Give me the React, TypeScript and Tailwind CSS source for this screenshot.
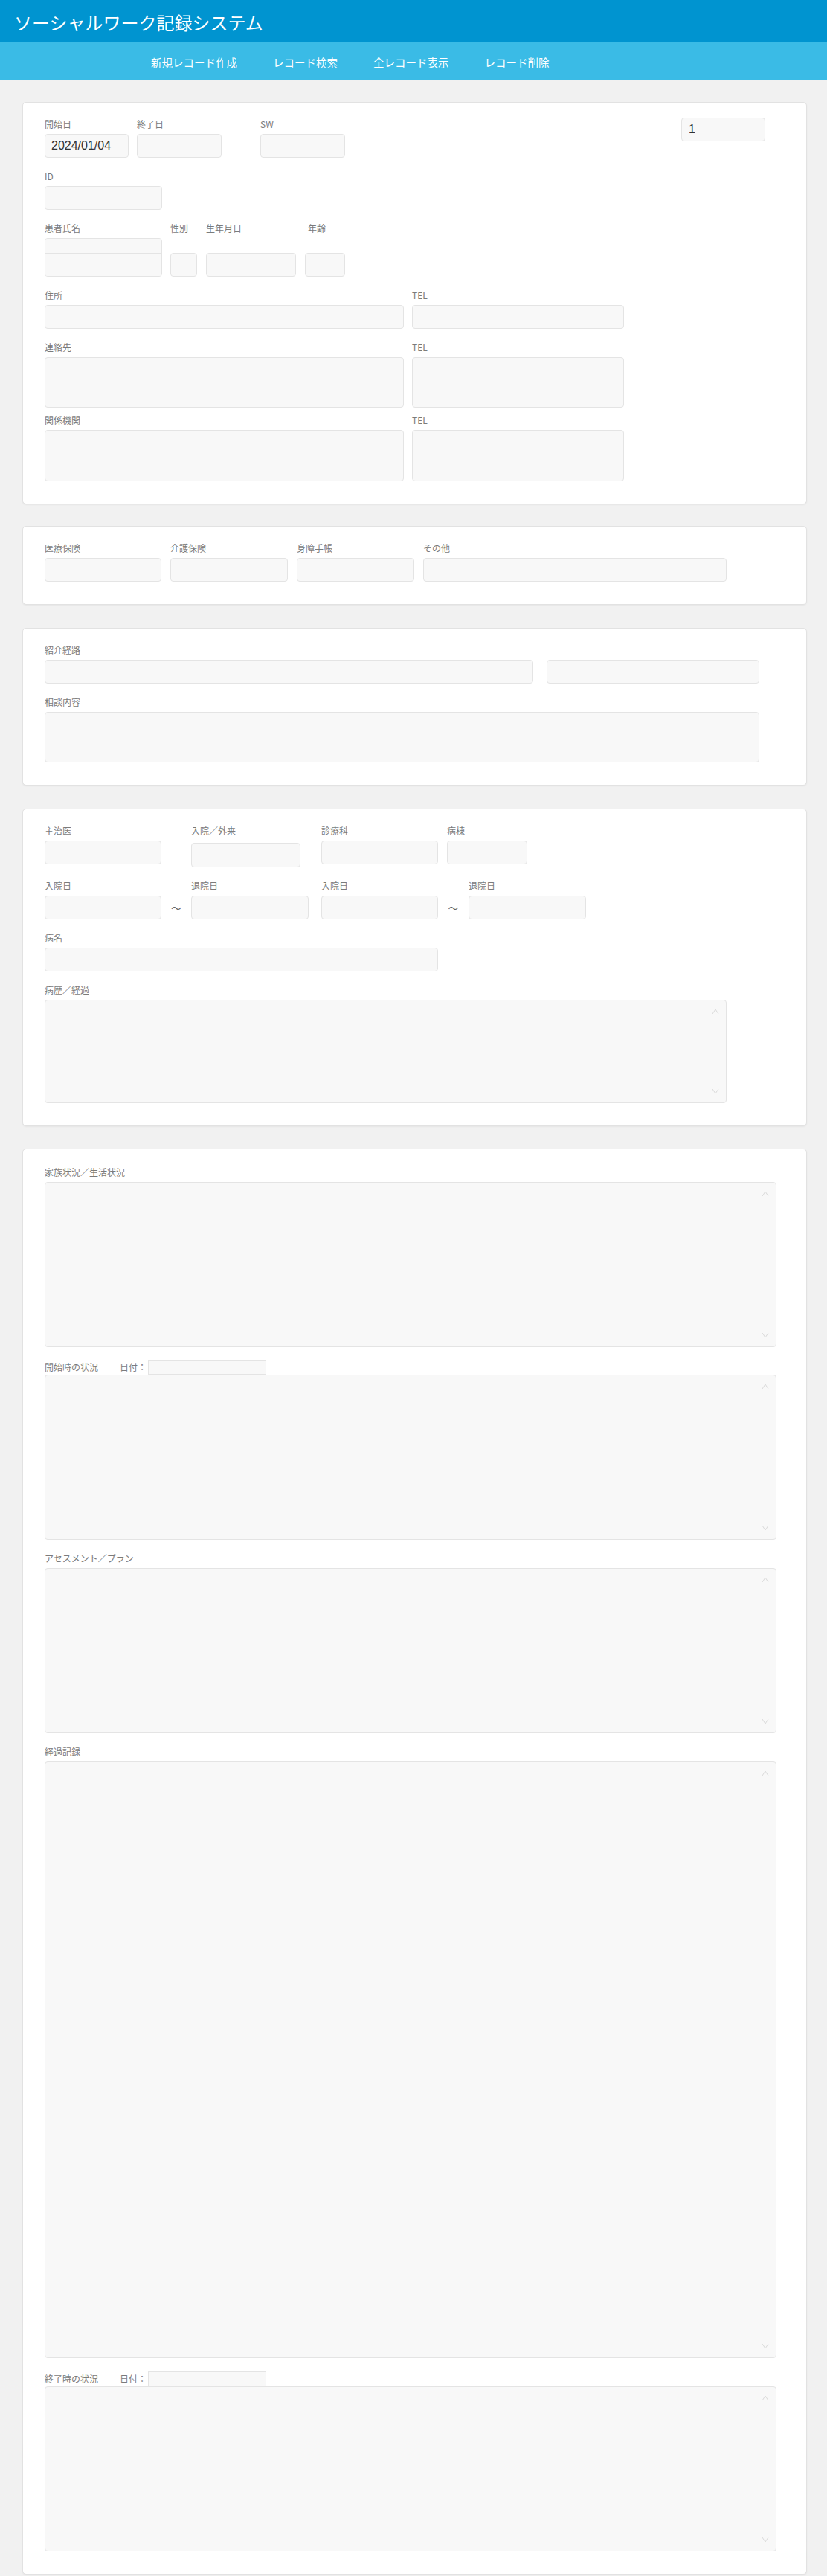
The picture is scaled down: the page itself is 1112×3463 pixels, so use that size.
import React from "react";

// ─── Shared styles ────────────────────────────────────────────────────────────

const boxCls =
  "h-[32px] rounded-[4px] border border-[#e4e4e4] bg-[#f8f8f8] px-[8px] text-[16px] text-[#333] font-['Liberation_Sans',sans-serif] outline-none";

// ─── Label ────────────────────────────────────────────────────────────────────

const Label = ({ children, className = "" }: { children: React.ReactNode; className?: string }) => (
  <div className={`h-[18px] whitespace-nowrap text-[12px] leading-[18px] text-[#7b7b7b] ${className}`}>
    {children}
  </div>
);

// ─── Field: label over a single-line input ────────────────────────────────────

const Field = ({
  label,
  width,
  value = "",
  className = "",
  labelClass = "",
  inputClass = "",
}: {
  label:       string;
  width:       string;
  value?:      string;
  className?:  string;
  labelClass?: string;
  inputClass?: string;
}) => (
  <div className={`flex shrink-0 flex-col ${className}`}>
    <Label className={labelClass}>{label}</Label>
    <input readOnly defaultValue={value} className={`${boxCls} mt-[4px] ${width} ${inputClass}`} />
  </div>
);

// ─── Scroll arrows (the faint ^ v drawn inside the long textareas) ────────────

const Chevron = ({ up, className }: { up: boolean; className: string }) => (
  <svg width="10" height="8" viewBox="0 0 10 8" className={`pointer-events-none absolute ${className}`}>
    <polyline
      points={up ? "1,7 5,1 9,7" : "1,1 5,7 9,1"}
      fill="none"
      stroke="#d9d9d9"
      strokeWidth="1"
    />
  </svg>
);

// ─── Area: textarea block ─────────────────────────────────────────────────────

const Area = ({
  width,
  height,
  arrows = false,
}: {
  width:   string;
  height:  string;
  arrows?: boolean;
}) => (
  <div className={`relative shrink-0 ${width}`}>
    <textarea
      readOnly
      className={`block w-full ${height} resize-none overflow-hidden rounded-[4px] border border-[#e4e4e4] bg-[#f8f8f8] outline-none`}
    />
    {arrows && (
      <>
        <Chevron up className="right-[10px] top-[12px]" />
        <Chevron up={false} className="bottom-[12px] right-[10px]" />
      </>
    )}
  </div>
);

// ─── Card ─────────────────────────────────────────────────────────────────────

const Card = ({ children, className = "" }: { children: React.ReactNode; className?: string }) => (
  <section
    className={`ml-[30px] w-[1055px] rounded-[5px] border border-[#e2e2e2] bg-white px-[29px] pb-[30px] shadow-[0_1px_2px_rgba(0,0,0,0.05)] ${className}`}
  >
    {children}
  </section>
);

// ─── Tilde between date pairs ─────────────────────────────────────────────────

const Tilde = ({ width }: { width: string }) => (
  <div className={`flex h-[32px] shrink-0 items-center justify-center self-end text-[14px] text-[#666] ${width}`}>
    ～
  </div>
);

// ─── Dated section: label + 日付 + small date box, textarea below ─────────────

const DatedArea = ({ label, className = "" }: { label: string; className?: string }) => (
  <div className={className}>
    <div className="flex h-[20px] items-center">
      <span className="w-[101px] text-[12px] text-[#7b7b7b]">{label}</span>
      <span className="w-[38px] text-[12px] text-[#7b7b7b]">日付：</span>
      <input readOnly className="h-[20px] w-[159px] border border-[#e4e4e4] bg-[#f8f8f8] outline-none" />
    </div>
    <Area width="w-[984px]" height="h-[222px]" arrows />
  </div>
);

// ─── App ──────────────────────────────────────────────────────────────────────

export default function App() {
  return (
    <div className="min-h-screen bg-[#f1f1f1] pb-[6px] font-['Noto_Sans_CJK_JP',sans-serif]">
      {/* Title bar */}
      <header className="flex h-[57px] items-center bg-[#0094d0] pl-[19px] pt-[2px]">
        <h1 className="text-[24px] font-normal leading-none text-white">ソーシャルワーク記録システム</h1>
      </header>

      {/* Menu */}
      <nav className="flex h-[50px] items-center gap-[48px] bg-[#3abbe6] pl-[203px] pt-[3px] text-[14.5px] text-white">
        <span>新規レコード作成</span>
        <span>レコード検索</span>
        <span>全レコード表示</span>
        <span>レコード削除</span>
      </nav>

      {/* ── Card 1: basic info ── */}
      <Card className="mt-[30px] pt-[20px]">
        <div className="flex items-start">
          <Field label="開始日" width="w-[113px]" value="2024/01/04" />
          <Field label="終了日" width="w-[114px]" className="ml-[11px]" />
          <Field label="SW" width="w-[114px]" className="ml-[52px]" />
          <input readOnly defaultValue="1" className={`${boxCls} ml-auto mr-[26px] w-[113px] px-[9px]`} />
        </div>

        <Field label="ID" width="w-[158px]" className="mt-[16px]" />

        <div className="mt-[16px] flex items-start">
          <div className="flex shrink-0 flex-col">
            <Label>患者氏名</Label>
            <div className="mt-[4px] flex w-[158px] flex-col overflow-hidden rounded-[4px] border border-[#e4e4e4] bg-[#f8f8f8]">
              <input readOnly className="h-[19px] bg-[#f8f8f8] outline-none" />
              <input readOnly className="h-[31px] border-t border-[#e4e4e4] bg-[#f8f8f8] outline-none" />
            </div>
          </div>
          <Field label="性別" width="w-[36px]" className="ml-[11px]" inputClass="mt-[24px]" />
          <Field label="生年月日" width="w-[121px]" className="ml-[12px]" inputClass="mt-[24px]" />
          <Field label="年齢" width="w-[54px]" className="ml-[12px]" labelClass="pl-[4px]" inputClass="mt-[24px]" />
        </div>

        <div className="mt-[16px] flex items-start gap-[11px]">
          <Field label="住所" width="w-[483px]" />
          <Field label="TEL" width="w-[285px]" />
        </div>

        <div className="mt-[16px] flex items-start gap-[11px]">
          <div>
            <Label>連絡先</Label>
            <div className="mt-[4px]"><Area width="w-[483px]" height="h-[68px]" /></div>
          </div>
          <div>
            <Label>TEL</Label>
            <div className="mt-[4px]"><Area width="w-[285px]" height="h-[68px]" /></div>
          </div>
        </div>

        <div className="mt-[8px] flex items-start gap-[11px]">
          <div>
            <Label>関係機関</Label>
            <div className="mt-[4px]"><Area width="w-[483px]" height="h-[69px]" /></div>
          </div>
          <div>
            <Label>TEL</Label>
            <div className="mt-[4px]"><Area width="w-[285px]" height="h-[69px]" /></div>
          </div>
        </div>
      </Card>

      {/* ── Card 2: insurance ── */}
      <Card className="mt-[29px] pt-[20px]">
        <div className="flex items-start gap-[12px]">
          <Field label="医療保険" width="w-[157px]" />
          <Field label="介護保険" width="w-[158px]" />
          <Field label="身障手帳" width="w-[158px]" />
          <Field label="その他" width="w-[408px]" />
        </div>
      </Card>

      {/* ── Card 3: referral ── */}
      <Card className="mt-[31px] pt-[20px]">
        <Label>紹介経路</Label>
        <div className="mt-[4px] flex gap-[18px]">
          <input readOnly className={`${boxCls} w-[657px]`} />
          <input readOnly className={`${boxCls} w-[286px]`} />
        </div>
        <Label className="mt-[16px]">相談内容</Label>
        <div className="mt-[4px]"><Area width="w-[961px]" height="h-[68px]" /></div>
      </Card>

      {/* ── Card 4: hospital ── */}
      <Card className="mt-[31px] pt-[20px]">
        <div className="flex items-start">
          <Field label="主治医" width="w-[157px]" />
          <div className="ml-[40px] flex shrink-0 flex-col">
            <Label>入院／外来</Label>
            <select className={`${boxCls} mt-[7px] h-[33px] w-[147px] appearance-none`} />
          </div>
          <Field label="診療科" width="w-[157px]" className="ml-[28px]" />
          <Field label="病棟" width="w-[108px]" className="ml-[12px]" />
        </div>

        <div className="mt-[16px] flex items-start">
          <Field label="入院日" width="w-[157px]" />
          <Tilde width="w-[40px]" />
          <Field label="退院日" width="w-[158px]" />
          <Field label="入院日" width="w-[157px]" className="ml-[17px]" />
          <Tilde width="w-[41px]" />
          <Field label="退院日" width="w-[158px]" />
        </div>

        <Field label="病名" width="w-[529px]" className="mt-[16px]" />

        <Label className="mt-[16px]">病歴／経過</Label>
        <div className="mt-[4px]"><Area width="w-[917px]" height="h-[139px]" arrows /></div>
      </Card>

      {/* ── Card 5: narrative records ── */}
      <Card className="mt-[30px] pt-[22px]">
        <Label>家族状況／生活状況</Label>
        <div className="mt-[4px]"><Area width="w-[984px]" height="h-[222px]" arrows /></div>

        <DatedArea label="開始時の状況" className="mt-[17px]" />

        <Label className="mt-[16px]">アセスメント／プラン</Label>
        <div className="mt-[4px]"><Area width="w-[984px]" height="h-[222px]" arrows /></div>

        <Label className="mt-[16px]">経過記録</Label>
        <div className="mt-[4px]"><Area width="w-[984px]" height="h-[802px]" arrows /></div>

        <DatedArea label="終了時の状況" className="mt-[18px]" />
      </Card>
    </div>
  );
}
